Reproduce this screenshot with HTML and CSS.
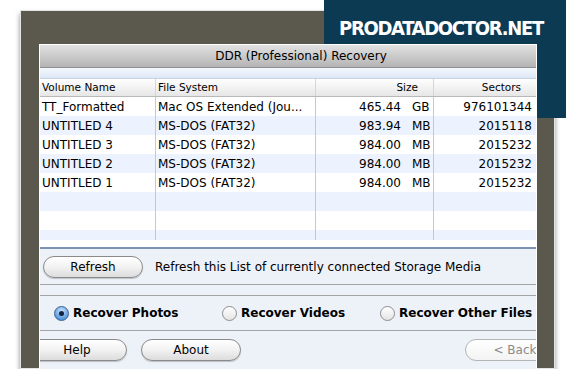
FILE: index.html
```html
<!DOCTYPE html>
<html lang="en">
<head>
    <meta charset="UTF-8">
    <title>DDR (Professional) Recovery</title>
    <link rel="stylesheet" href="styles.css">
</head>
<body>

<div class="badge">PRODATADOCTOR.NET</div>

<div class="frame">
    <div class="window">
        <div class="titlebar">DDR (Professional) Recovery</div>
        <div class="strip"></div>

        <!-- Lista de volumenes -->
        <div class="list">
            <div class="row head">
                <div class="cell">Volume Name</div>
                <div class="cell">File System</div>
                <div class="cell num">Size</div>
                <div class="cell num">Sectors</div>
            </div>
            <div class="body">
                <div class="row">
                    <div class="cell">TT_Formatted</div>
                    <div class="cell">Mac OS Extended (Jou...</div>
                    <div class="cell size"><span>465.44</span><span class="unit">GB</span></div>
                    <div class="cell sectors">976101344</div>
                </div>
                <div class="row">
                    <div class="cell">UNTITLED 4</div>
                    <div class="cell">MS-DOS (FAT32)</div>
                    <div class="cell size"><span>983.94</span><span class="unit">MB</span></div>
                    <div class="cell sectors">2015118</div>
                </div>
                <div class="row">
                    <div class="cell">UNTITLED 3</div>
                    <div class="cell">MS-DOS (FAT32)</div>
                    <div class="cell size"><span>984.00</span><span class="unit">MB</span></div>
                    <div class="cell sectors">2015232</div>
                </div>
                <div class="row">
                    <div class="cell">UNTITLED 2</div>
                    <div class="cell">MS-DOS (FAT32)</div>
                    <div class="cell size"><span>984.00</span><span class="unit">MB</span></div>
                    <div class="cell sectors">2015232</div>
                </div>
                <div class="row">
                    <div class="cell">UNTITLED 1</div>
                    <div class="cell">MS-DOS (FAT32)</div>
                    <div class="cell size"><span>984.00</span><span class="unit">MB</span></div>
                    <div class="cell sectors">2015232</div>
                </div>
                <div class="row"><div class="cell"></div><div class="cell"></div><div class="cell"></div><div class="cell"></div></div>
                <div class="row"><div class="cell"></div><div class="cell"></div><div class="cell"></div><div class="cell"></div></div>
                <div class="row"><div class="cell"></div><div class="cell"></div><div class="cell"></div><div class="cell"></div></div>
            </div>
        </div>

        <div class="panel">
            <div class="refresh">
                <button class="pill">Refresh</button>
                <span class="hint">Refresh this List of currently connected Storage Media</span>
            </div>
            <div class="gap"></div>
            <div class="options">
                <label class="option"><span class="radio on"></span>Recover Photos</label>
                <label class="option"><span class="radio"></span>Recover Videos</label>
                <label class="option"><span class="radio"></span>Recover Other Files</label>
            </div>
            <div class="actions">
                <button class="pill help">Help</button>
                <button class="pill about">About</button>
                <button class="pill back" disabled>&lt; Back</button>
            </div>
        </div>
    </div>
</div>

</body>
</html>
```

FILE: styles.css
```css
body {
    margin: 0;
    padding: 10px 0 0 20px;
    background-color: #ffffff;
    font-family: 'DejaVu Sans', sans-serif;
    font-size: 12px;
    color: #000000;
}

.badge {
    position: absolute;
    left: 324px;
    top: 0;
    width: 242px;
    height: 118px;
    box-sizing: border-box;
    padding: 18px 0 0 15px;
    background-color: #0d3a53;
    color: #ffffff;
    font-family: 'DejaVu Sans Condensed', 'DejaVu Sans', sans-serif;
    font-weight: bold;
    font-size: 20px;
    letter-spacing: -1.3px;
    line-height: 1;
    z-index: 1;
}

.frame {
    width: 535px;
    height: 359px;
    box-sizing: border-box;
    background-color: #5b594d;
    border: 1px solid #e4e4e4;
    padding: 33px 17px 0 18px;
    box-shadow: 0 4px 5px rgba(0, 0, 0, 0.45);
}

.window {
    position: relative;
    z-index: 2;
    height: 325px;
    border: 1px solid #ffffff;
    border-bottom: none;
    background-color: #ffffff;
    overflow: hidden;
    display: flex;
    flex-direction: column;
}

.titlebar {
    height: 23px;
    line-height: 23px;
    text-align: center;
    padding-left: 26px;
    font-size: 12px;
    background: linear-gradient(#e2e2e2, #b4b4b4);
    border-bottom: 1px solid #8f8f8f;
    box-sizing: border-box;
}

.strip {
    height: 10px;
    background: linear-gradient(#f4f8fd, #dde8f6);
    border-bottom: 1px solid #c9d4e3;
}

.list {
    height: 168px;
    background-color: #ffffff;
    border-bottom: 2px solid #7b93b3;
}

.row {
    display: grid;
    grid-template-columns: 116px 160px 118px 1fr;
    height: 19px;
    line-height: 19px;
}

.cell {
    padding-left: 2px;
    white-space: nowrap;
    overflow: hidden;
    border-right: 1px solid #c8c8c8;
}

.cell:last-child {
    border-right: none;
}

.head {
    height: 17px;
    line-height: 17px;
    font-size: 10.5px;
    background: linear-gradient(#ffffff, #e6e6e6);
    border-bottom: 1px solid #b9b9b9;
}

.head .cell {
    border-right-color: #d6d6d6;
}

.head .num {
    text-align: right;
    padding-right: 15px;
}

.body {
    height: 143px;
    overflow: hidden;
}

.body .row {
    line-height: 21px;
}

.body .row:nth-child(even) {
    background-color: #edf3fe;
}

.size {
    display: flex;
    justify-content: flex-end;
    padding-right: 1px;
}

.unit {
    width: 20px;
    margin-left: 11px;
}

.sectors {
    text-align: right;
    padding-right: 4px;
}

.panel {
    flex: 1;
    background-color: #edf1f8;
}

.refresh {
    display: flex;
    align-items: center;
    height: 35px;
    padding-left: 3px;
    border-bottom: 1px solid #a3a3a3;
}

.hint {
    margin-left: 12px;
    font-size: 12px;
}

.gap {
    height: 10px;
    border-bottom: 1px solid #a3a3a3;
}

.pill {
    width: 100px;
    height: 22px;
    border: 1px solid #8a8a8a;
    border-radius: 11px;
    background: linear-gradient(#ffffff, #f2f2f2 50%, #dcdcdc);
    font-family: 'DejaVu Sans', sans-serif;
    font-size: 12px;
    color: #000000;
    padding: 0;
    box-shadow: 0 1px 1px rgba(0, 0, 0, 0.2);
}

.options {
    display: grid;
    grid-template-columns: 168px 158px auto;
    align-items: center;
    height: 34px;
    padding-left: 14px;
    border-bottom: 1px solid #a3a3a3;
    font-weight: bold;
}

.option {
    display: flex;
    align-items: center;
}

.radio {
    width: 13px;
    height: 13px;
    border-radius: 50%;
    border: 1px solid #8d8d8d;
    background: linear-gradient(#ffffff, #e4e4e4);
    margin-right: 4px;
    position: relative;
}

.radio.on {
    border-color: #3b5f90;
    background: radial-gradient(circle at 50% 30%, #c8e2fb, #5a9be0 70%, #3a79c6);
}

.radio.on::after {
    content: "";
    position: absolute;
    left: 4px;
    top: 4px;
    width: 5px;
    height: 5px;
    border-radius: 50%;
    background-color: #10233c;
}

.actions {
    display: flex;
    align-items: center;
    height: 39px;
    padding-bottom: 1px;
    box-sizing: border-box;
}

.help {
    margin-left: -13px;
}

.about {
    margin-left: 14px;
}

.back {
    margin-left: auto;
    margin-right: -29px;
    color: #8a8a8a;
    border-color: #b5b5b5;
    background: linear-gradient(#ffffff, #f3f3f3);
    box-shadow: none;
}
```
